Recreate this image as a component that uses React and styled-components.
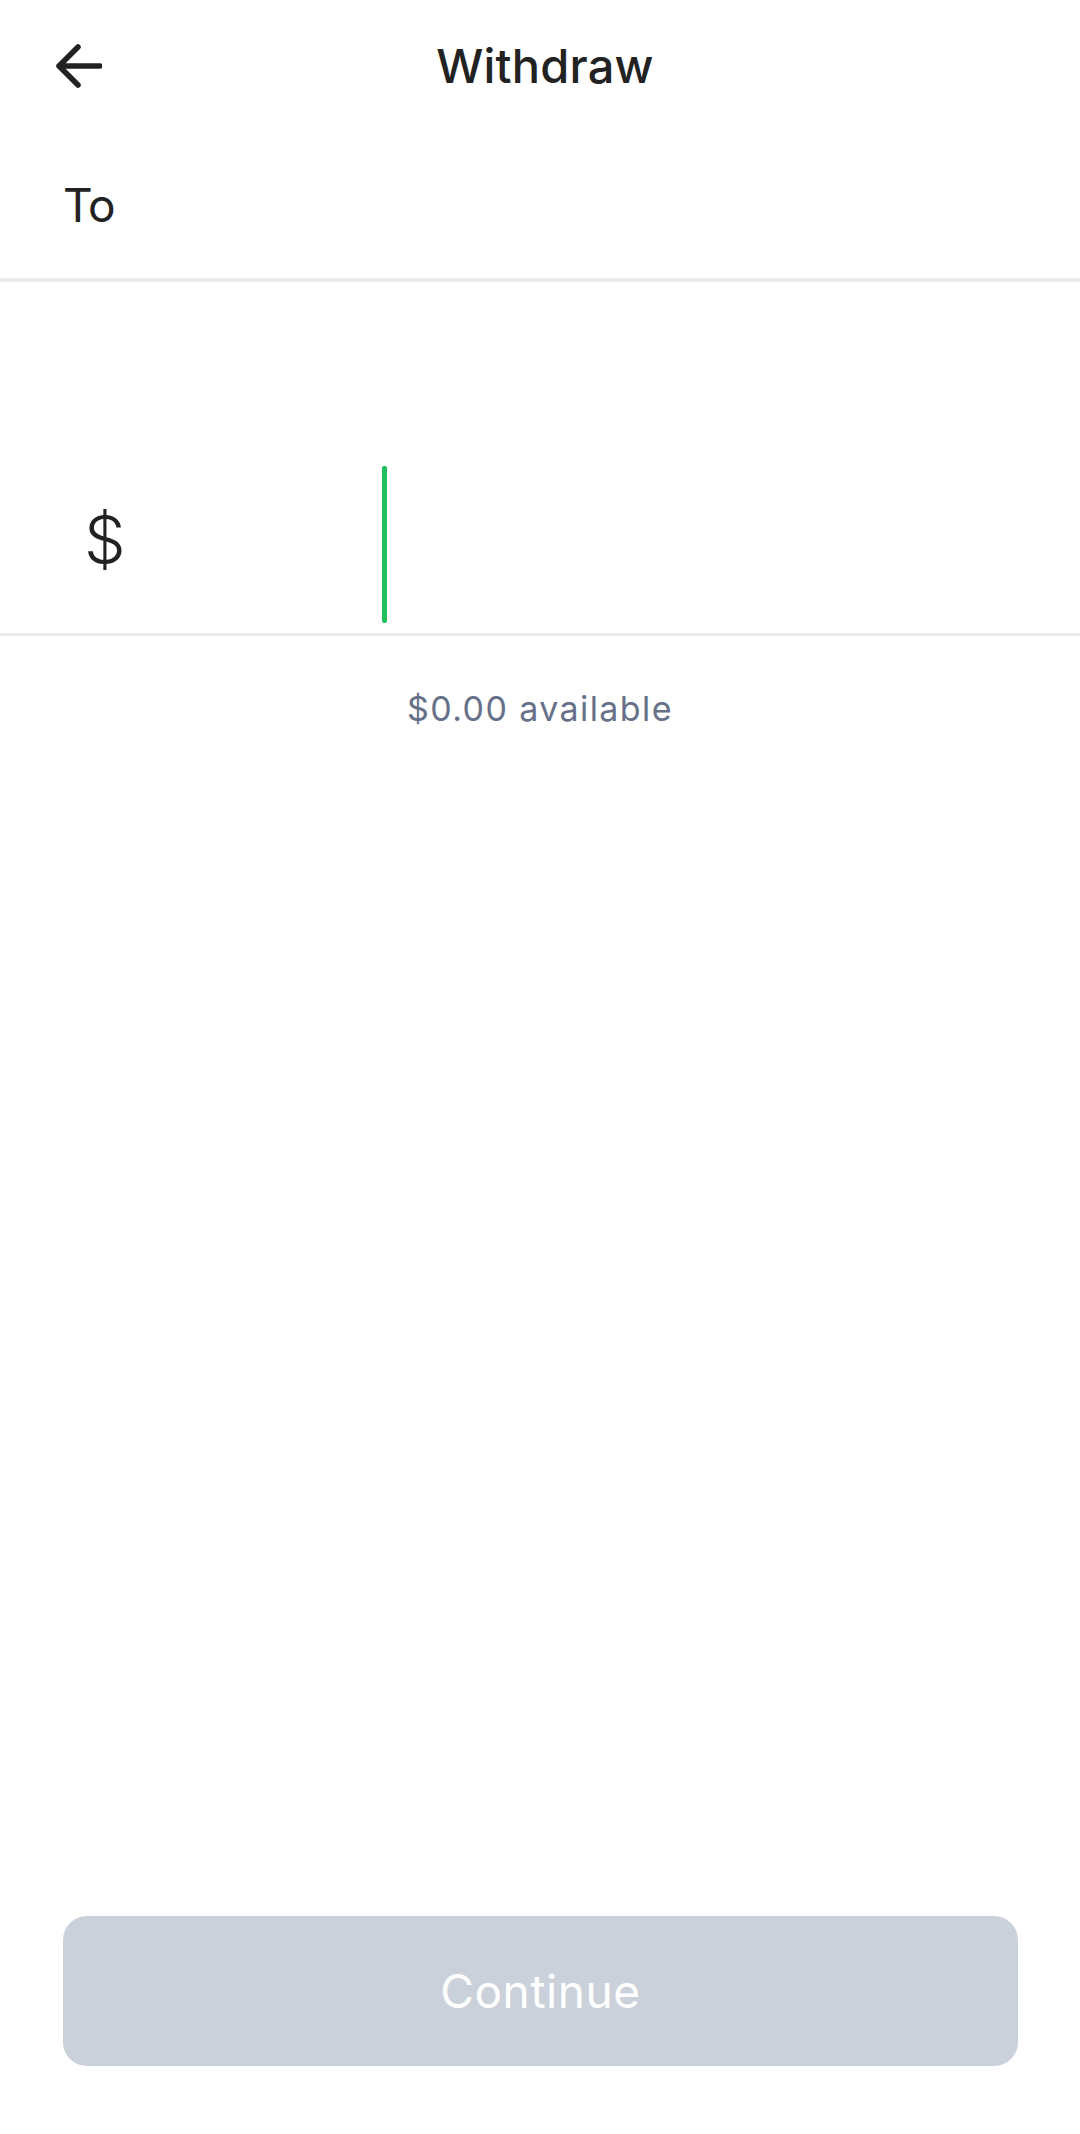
import React from 'react';
import styled, { createGlobalStyle } from 'styled-components';

const GlobalStyle = createGlobalStyle`
  body {
    margin: 0;
    background: #ffffff;
    font-family: Inter, "Noto Sans", sans-serif;
  }
`;

const Screen = styled.div`
  display: flex;
  flex-direction: column;
  min-height: 100vh;
  background: #ffffff;
  color: #222222;
`;

const Header = styled.header`
  display: grid;
  grid-template-columns: 1fr auto 1fr;
  align-items: center;
  height: 131px;
`;

const BackButton = styled.button`
  justify-self: start;
  display: flex;
  align-items: center;
  margin-left: 56px;
  padding: 0;
  border: none;
  background: none;
  color: #222222;
  cursor: pointer;
`;

const Title = styled.h1`
  margin: 0 0 0 10px;
  font-size: 47px;
  font-weight: 500;
  letter-spacing: 0.2px;
`;

const ToRow = styled.div`
  display: flex;
  align-items: center;
  height: 147px;
  padding-left: 63px;
  font-size: 46px;
  font-weight: 400;
  letter-spacing: -1px;
`;

const Divider = styled.div`
  height: ${(p) => p.thick}px;
  background: #ececec;
`;

const AmountArea = styled.div`
  display: flex;
  align-items: flex-end;
  height: 351px;
  padding-bottom: 10px;
  box-sizing: border-box;
`;

const AmountRow = styled.div`
  display: flex;
  align-items: center;
  height: 157px;
  padding-left: 84px;
`;

const Dollar = styled.span`
  width: 298px;
  margin-bottom: 12px;
  font-size: 66px;
  font-weight: 300;
  color: #222222;
`;

const Caret = styled.span`
  width: 5px;
  height: 157px;
  background: #20c05c;
  border-radius: 2px;
`;

const Available = styled.p`
  margin: 52px 0 0;
  text-align: center;
  font-size: 34px;
  font-weight: 400;
  letter-spacing: 1.4px;
  color: #667189;
`;

const Spacer = styled.div`
  flex: 1;
`;

const Footer = styled.div`
  padding: 0 62px 68px 63px;
`;

const ContinueButton = styled.button`
  width: 100%;
  height: 150px;
  border: none;
  border-radius: 24px;
  background: #cbd1db;
  color: #ffffff;
  font-family: inherit;
  font-size: 46px;
  font-weight: 400;
  letter-spacing: 0.6px;
`;

function BackArrow() {
  return (
    <svg width="46" height="44" viewBox="0 0 46 44" fill="none">
      <path
        d="M22 3 L3 22 L22 41 M3 22 H44"
        stroke="currentColor"
        strokeWidth="5.5"
        strokeLinecap="round"
        strokeLinejoin="round"
      />
    </svg>
  );
}

export default function App() {
  return (
    <>
      <GlobalStyle />
      <Screen>
        <Header>
          <BackButton aria-label="Back">
            <BackArrow />
          </BackButton>
          <Title>Withdraw</Title>
          <span />
        </Header>
        <ToRow>To</ToRow>
        <Divider thick={4} />
        <AmountArea>
          <AmountRow>
            <Dollar>$</Dollar>
            <Caret />
          </AmountRow>
        </AmountArea>
        <Divider thick={3} />
        <Available>$0.00 available</Available>
        <Spacer />
        <Footer>
          <ContinueButton disabled>Continue</ContinueButton>
        </Footer>
      </Screen>
    </>
  );
}
